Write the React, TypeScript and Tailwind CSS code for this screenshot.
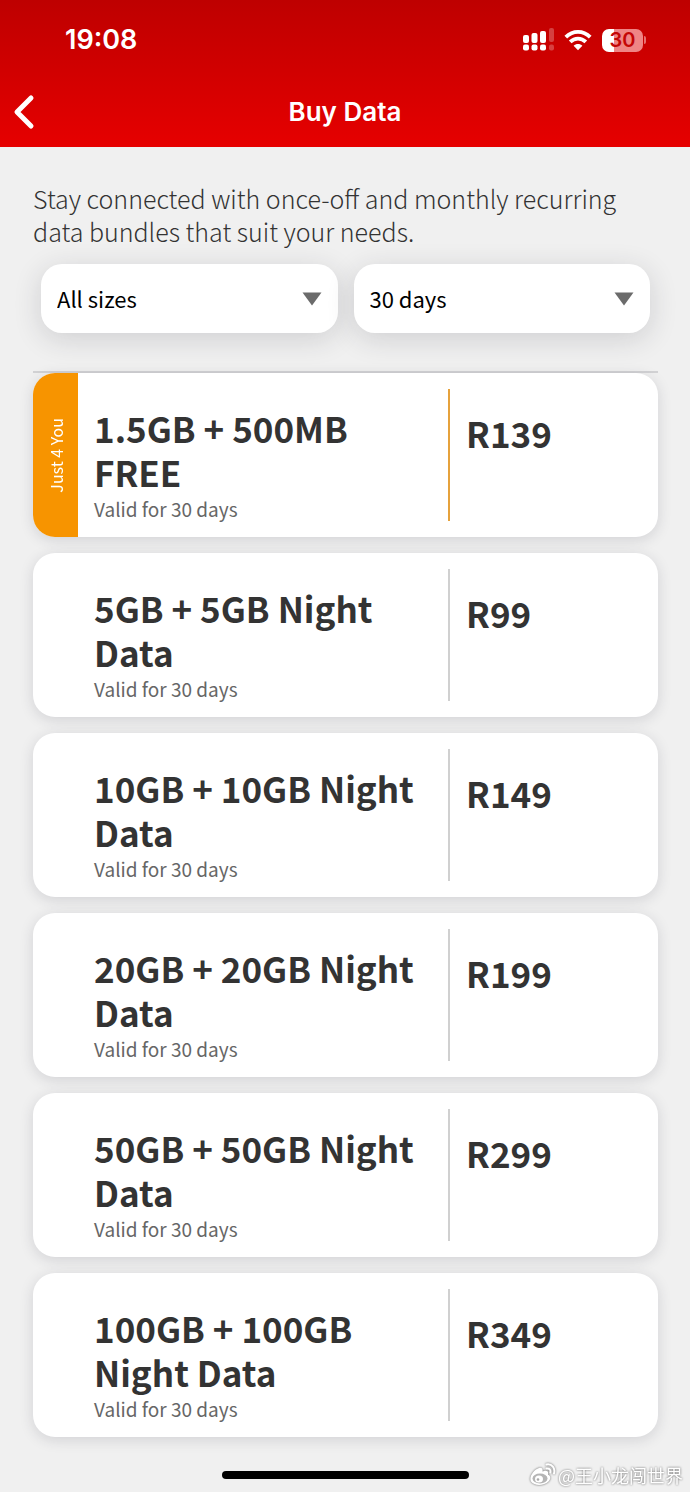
import React, { useState } from 'react';

interface Bundle {
  id: string;
  title: string;
  validity: string;
  price: string;
  tag?: string;
}

const bundles: Bundle[] = [
  { id: '1', title: '1.5GB + 500MB FREE', validity: 'Valid for 30 days', price: 'R139', tag: 'Just 4 You' },
  { id: '2', title: '5GB + 5GB Night Data', validity: 'Valid for 30 days', price: 'R99' },
  { id: '3', title: '10GB + 10GB Night Data', validity: 'Valid for 30 days', price: 'R149' },
  { id: '4', title: '20GB + 20GB Night Data', validity: 'Valid for 30 days', price: 'R199' },
  { id: '5', title: '50GB + 50GB Night Data', validity: 'Valid for 30 days', price: 'R299' },
  { id: '6', title: '100GB + 100GB Night Data', validity: 'Valid for 30 days', price: 'R349' },
];

const StatusBar: React.FC = () => (
  <div className="flex h-20 items-center justify-between pl-[65px] pr-11">
    <span className="text-[27px] leading-8 font-semibold">19:08</span>
    <div className="flex items-center gap-[10px]">
      {/* Dual SIM signal */}
      <svg width="32" height="24" viewBox="0 0 32 24" fill="#fff">
        <rect x="1" y="7" width="6" height="8" rx="2" />
        <rect x="9.5" y="5" width="6" height="10" rx="2" />
        <rect x="18" y="3" width="6" height="12" rx="2" />
        <rect x="27" y="0" width="5" height="14" rx="2" opacity="0.25" />
        <rect x="1" y="16.500" width="6" height="6" rx="2" />
        <rect x="9.5" y="16.500" width="6" height="6" rx="2" />
        <rect x="18" y="16.500" width="6" height="6" rx="2" />
        <rect x="27" y="16.500" width="5" height="6" rx="2" opacity="0.25" />
      </svg>
      {/* Wifi */}
      <svg width="28" height="22" viewBox="0 0 28 22" fill="none" stroke="#fff" strokeWidth="3.8">
        <path d="M1.8 8.2C8.8 1.1 19.2 1.1 26.2 8.2" />
        <path d="M6.2 12.9C10.8 8.4 17.2 8.4 21.8 12.9" />
        <path d="M14 21.2L9.6 16.8C12 14.4 16 14.4 18.4 16.8Z" fill="#fff" stroke="none" />
      </svg>
      {/* Battery */}
      <div className="flex items-center gap-px">
        <div className="flex h-[23px] w-[41px] items-center justify-center rounded-[7px] bg-[linear-gradient(90deg,#fff_30%,#ef8585_30%)] text-[20px] leading-6 font-semibold text-[#c40606]">
          30
        </div>
        <span className="h-2 w-0.5 rounded-r-full bg-[#e87070]" />
      </div>
    </div>
  </div>
);

interface FilterSelectProps {
  label: string;
  options: string[];
}

const FilterSelect: React.FC<FilterSelectProps> = ({ label, options }) => {
  const [value, setValue] = useState(options[0]);

  return (
    <div className="relative flex-1">
      <select
        aria-label={label}
        value={value}
        onChange={(e) => setValue(e.target.value)}
        className="h-[69px] w-full appearance-none rounded-[21px] bg-white px-4 text-[22px] text-black shadow-[0_6px_28px_rgba(40,40,50,0.16)]"
      >
        {options.map((option) => (
          <option key={option}>{option}</option>
        ))}
      </select>
      <svg className="pointer-events-none absolute top-7 right-4" width="20" height="14" viewBox="0 0 20 14">
        <path d="M0.5 0.5H19.5L10 13.5Z" fill="#6b6b6b" />
      </svg>
    </div>
  );
};

const BundleCard: React.FC<{ bundle: Bundle }> = ({ bundle }) => (
  <li className="flex h-[164px] overflow-hidden rounded-[22px] bg-white shadow-[0_3px_14px_rgba(40,40,60,0.15)]">
    <div className={`flex w-[45px] shrink-0 items-center justify-center ${bundle.tag ? 'bg-[#f79400]' : ''}`}>
      {bundle.tag && (
        <span className="rotate-180 text-[16px] leading-6 text-white [writing-mode:vertical-rl]">{bundle.tag}</span>
      )}
    </div>
    <div className="min-w-0 flex-[368] px-4 pt-[33px]">
      <h2 className="text-[35px] leading-[44px] font-bold">{bundle.title}</h2>
      <p className="mt-[3px] text-[19px] leading-6 text-[#666]">{bundle.validity}</p>
    </div>
    <div className={`my-4 flex-[209] border-l-2 pt-[22px] pl-4 ${bundle.tag ? 'border-[#e6a23c]' : 'border-[#d0d0d0]'}`}>
      <span className="text-[35px] leading-[44px] font-bold">{bundle.price}</span>
    </div>
  </li>
);

export default function App() {
  return (
    <div className="min-h-screen bg-[#f0f0f0] font-['Noto_Sans_CJK_SC','Noto_Sans',sans-serif] text-[#333]">
      {/* Header */}
      <header className="bg-linear-to-b from-[#be0000] to-[#e60000] font-['Inter',sans-serif] text-white">
        <StatusBar />
        <div className="grid h-[67px] grid-cols-[80px_1fr_80px] items-center pb-1">
          <button aria-label="Back" className="flex h-12 items-center pl-[13px]">
            <svg width="22" height="36" viewBox="0 0 22 36" fill="none" stroke="#fff" strokeWidth="5" strokeLinecap="round" strokeLinejoin="round">
              <path d="M18 4L4 18L18 32" />
            </svg>
          </button>
          <h1 className="text-center text-[26px] leading-8 font-semibold">Buy Data</h1>
        </div>
      </header>

      <main className="pt-[35px] pr-8 pl-[33px]">
        <p className="text-[25px] leading-[33px] font-light">
          Stay connected with once-off and monthly recurring data bundles that suit your needs.
        </p>

        {/* Filters */}
        <div className="mt-4 flex gap-4 px-2">
          <FilterSelect label="Bundle size" options={['All sizes', 'Small', 'Medium', 'Large']} />
          <FilterSelect label="Validity" options={['30 days', '7 days', '1 day']} />
        </div>

        {/* Bundles */}
        <ul className="mt-[38px] flex flex-col gap-4 border-t-2 border-[#d2d2d4]">
          {bundles.map((bundle) => (
            <BundleCard key={bundle.id} bundle={bundle} />
          ))}
        </ul>
      </main>

      <footer className="grid grid-cols-[1fr_247px_1fr] items-center pt-[26px]">
        <span className="col-start-2 h-2 rounded-full bg-black" />
        <div className="flex items-center justify-end gap-0.5 pr-[7px] text-white drop-shadow-[0_0_1px_rgba(0,0,0,0.6)]">
          <svg width="27" height="24" viewBox="0 0 27 24" fill="none">
            <path d="M10 5C13 4 14 6 13.500 8.500C17 7 20 8 19 11.500C22 13 22 16 19.500 18.500C15 23 5 23 2 18.500C-0.500 14 5 6.500 10 5Z" fill="#fff" />
            <ellipse cx="11" cy="15.500" rx="7.500" ry="5" fill="#b5b5b5" />
            <ellipse cx="10" cy="16" rx="4" ry="3.500" fill="#fff" />
            <circle cx="9" cy="16.500" r="1.300" fill="#aaa" />
            <path d="M17.500 5.500C20.500 5 22 7 21.300 9.500M17.500 1.500C23 0.500 26.500 5 25 10.500" stroke="#fff" strokeWidth="2" strokeLinecap="round" />
          </svg>
          <span className="text-[18px] leading-6 whitespace-nowrap">@王小龙闯世界</span>
        </div>
      </footer>
    </div>
  );
}
